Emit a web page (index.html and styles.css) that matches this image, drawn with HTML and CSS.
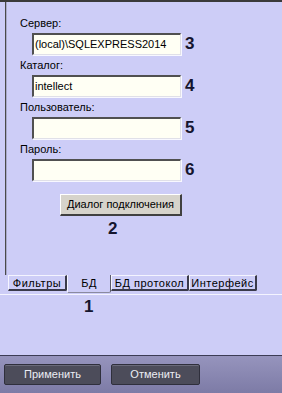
FILE: index.html
```html
<!DOCTYPE html>
<html lang="ru">
<head>
<meta charset="utf-8">
<link rel="stylesheet" href="styles.css">
</head>
<body>
<div class="window">
  <div class="topbar"></div>
  <div class="panel">
    <div class="field">
      <div class="label">Сервер:</div>
      <div class="row"><div class="input">(local)\SQLEXPRESS2014</div><span class="num">3</span></div>
    </div>
    <div class="field">
      <div class="label">Каталог:</div>
      <div class="row"><div class="input">intellect</div><span class="num">4</span></div>
    </div>
    <div class="field">
      <div class="label">Пользователь:</div>
      <div class="row"><div class="input"></div><span class="num">5</span></div>
    </div>
    <div class="field">
      <div class="label">Пароль:</div>
      <div class="row"><div class="input"></div><span class="num">6</span></div>
    </div>
    <div class="btn">Диалог подключения</div>
    <div class="num num-2">2</div>
  </div>
  <div class="tabs">
    <div class="tab tab-w1">Фильтры</div>
    <div class="tab tab-active tab-w2">БД</div>
    <div class="tab tab-w3">БД протокол</div>
    <div class="tab tab-w4">Интерфейс</div>
  </div>
  <div class="sep"></div>
  <div class="num num-1">1</div>
  <div class="spacer"></div>
  <div class="footer">
    <div class="fbtn fbtn-apply">Применить</div>
    <div class="fbtn fbtn-cancel">Отменить</div>
  </div>
</div>
</body>
</html>
```
FILE: styles.css
```css
* { box-sizing: border-box; }
html, body { margin: 0; padding: 0; }
body {
  width: 282px;
  height: 393px;
  overflow: hidden;
  background: #cdcdf7;
  font-family: "Liberation Sans", Arial, sans-serif;
  font-size: 11px;
  color: #000;
}
.window {
  display: flex;
  flex-direction: column;
  height: 393px;
}
.topbar {
  height: 2px;
  background: #3a3a3a;
  flex: none;
}
.panel {
  flex: none;
  height: 273px;
  margin-left: 5px;
  border-left: 1px solid #4a4a4a;
  box-shadow: inset 1px 0 0 #a8a8c8;
  padding: 14px 0 0 14px;
  display: flex;
  flex-direction: column;
}
.field {
  display: flex;
  flex-direction: column;
  margin-bottom: 3px;
}
.label {
  height: 14px;
  line-height: 14px;
  margin-bottom: 3px;
}
.row {
  display: flex;
  align-items: center;
  margin-left: 12px;
}
.input {
  width: 149px;
  height: 22px;
  background: #fffff4;
  border-top: 2px solid #505050;
  border-left: 2px solid #505050;
  border-right: 1px solid #e0e0e8;
  border-bottom: 1px solid #e0e0e8;
  box-shadow: 1px 1px 0 #f8f8ff;
  padding: 0 0 0 1px;
  line-height: 18px;
  white-space: nowrap;
  overflow: hidden;
}
.num {
  font-weight: bold;
  font-size: 17px;
  line-height: 18px;
  color: #15152e;
  margin-left: 4px;
}
.btn {
  align-self: flex-start;
  margin: 10px 0 0 40px;
  width: 122px;
  height: 22px;
  background: #d6d3cb;
  border-top: 1px solid #ffffff;
  border-left: 1px solid #ffffff;
  border-right: 2px solid #404040;
  border-bottom: 2px solid #404040;
  text-align: center;
  line-height: 19px;
}
.num-2 {
  margin: 4px 0 0 88px;
}
.tabs {
  flex: none;
  display: flex;
  align-items: flex-start;
  height: 19px;
  padding-left: 8px;
  font-size: 11px;
  letter-spacing: 0.5px;
}
.tab {
  height: 16px;
  line-height: 14px;
  text-align: center;
  border-top: 1px solid #f4f4ff;
  border-left: 1px solid #f4f4ff;
  border-right: 2px solid #3a3a4a;
  border-bottom: 2px solid #3a3a4a;
  border-bottom-right-radius: 2px;
}
.tab-active {
  height: 18px;
  border-top: none;
  border-left: 1px solid #f4f4ff;
  border-right: 1px solid #5a5a6a;
  border-bottom: 1px solid #8a8aa0;
  line-height: 16px;
}
.tab-w1 { width: 59px; }
.tab-w2 { width: 44px; }
.tab-w3 { width: 78px; }
.tab-w4 { width: 68px; }
.sep {
  flex: none;
  height: 1px;
  background: #f4f4ff;
}
.num-1 {
  flex: none;
  margin: 3px 0 0 84px;
  height: 18px;
}
.spacer { flex: 1; }
.footer {
  flex: none;
  height: 38px;
  border-top: 1px solid #3c3c55;
  background: linear-gradient(#9694bd, #7d7ba6);
  display: flex;
  align-items: flex-start;
  padding: 8px 0 0 4px;
  gap: 10px;
}
.fbtn {
  height: 21px;
  background: #4c4c5a;
  border: 1px solid #2f2f3c;
  box-shadow: inset 0 1px 0 #6a6a7a;
  border-radius: 2px;
  color: #ececf4;
  text-align: center;
  line-height: 19px;
  font-size: 11px;
}
.fbtn-apply { width: 97px; }
.fbtn-cancel { width: 89px; }
```
